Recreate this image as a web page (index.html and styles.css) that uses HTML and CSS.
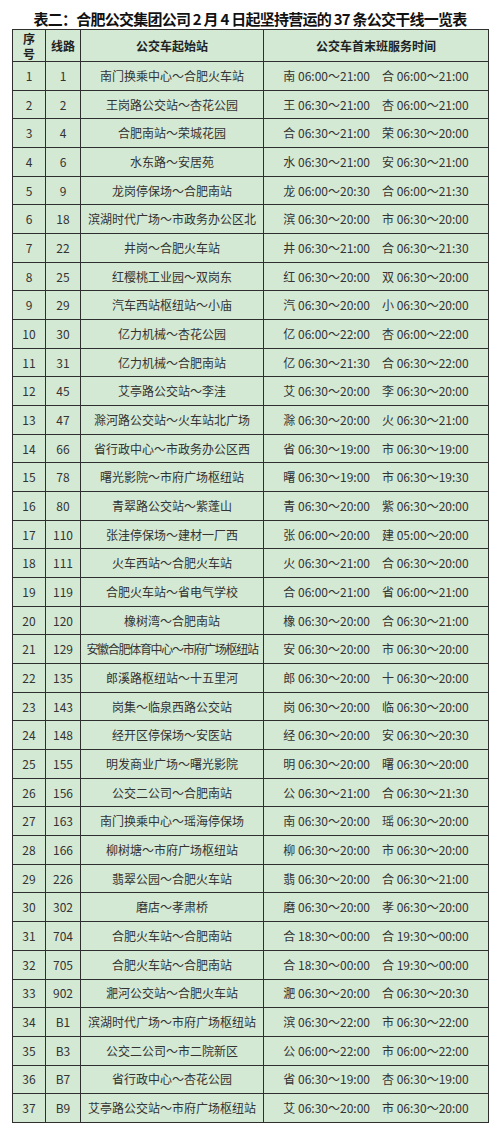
FILE: index.html
```html
<!DOCTYPE html>
<html lang="zh-CN">
<head>
<meta charset="utf-8">
<title>公交干线一览表</title>
<link rel="stylesheet" href="styles.css">
</head>
<body>
<div class="page">
<h1 class="title">表二：合肥公交集团公司 2 月 4 日起坚持营运的 37 条公交干线一览表</h1>
<table class="bus">
<colgroup><col class="c1"><col class="c2"><col class="c3"><col class="c4"></colgroup>
<thead>
<tr><th>序<br>号</th><th>线路</th><th>公交车起始站</th><th>公交车首末班服务时间</th></tr>
</thead>
<tbody>
<tr><td>1</td><td>1</td><td>南门换乘中心～合肥火车站</td><td><span class="t">南 06:00～21:00</span><span class="t">合 06:00～21:00</span></td></tr>
<tr><td>2</td><td>2</td><td>王岗路公交站～杏花公园</td><td><span class="t">王 06:30～21:00</span><span class="t">杏 06:00～21:00</span></td></tr>
<tr><td>3</td><td>4</td><td>合肥南站～荣城花园</td><td><span class="t">合 06:30～21:00</span><span class="t">荣 06:30～20:00</span></td></tr>
<tr><td>4</td><td>6</td><td>水东路～安居苑</td><td><span class="t">水 06:30～21:00</span><span class="t">安 06:30～21:00</span></td></tr>
<tr><td>5</td><td>9</td><td>龙岗停保场～合肥南站</td><td><span class="t">龙 06:00～20:30</span><span class="t">合 06:00～21:30</span></td></tr>
<tr><td>6</td><td>18</td><td>滨湖时代广场～市政务办公区北</td><td><span class="t">滨 06:30～20:00</span><span class="t">市 06:30～20:00</span></td></tr>
<tr><td>7</td><td>22</td><td>井岗～合肥火车站</td><td><span class="t">井 06:30～21:00</span><span class="t">合 06:30～21:30</span></td></tr>
<tr><td>8</td><td>25</td><td>红樱桃工业园～双岗东</td><td><span class="t">红 06:30～20:00</span><span class="t">双 06:30～20:00</span></td></tr>
<tr><td>9</td><td>29</td><td>汽车西站枢纽站～小庙</td><td><span class="t">汽 06:30～20:00</span><span class="t">小 06:30～20:00</span></td></tr>
<tr><td>10</td><td>30</td><td>亿力机械～杏花公园</td><td><span class="t">亿 06:00～22:00</span><span class="t">杏 06:00～22:00</span></td></tr>
<tr><td>11</td><td>31</td><td>亿力机械～合肥南站</td><td><span class="t">亿 06:30～21:30</span><span class="t">合 06:30～22:00</span></td></tr>
<tr><td>12</td><td>45</td><td>艾亭路公交站～李洼</td><td><span class="t">艾 06:30～20:00</span><span class="t">李 06:30～20:00</span></td></tr>
<tr><td>13</td><td>47</td><td>滁河路公交站～火车站北广场</td><td><span class="t">滁 06:30～20:00</span><span class="t">火 06:30～21:00</span></td></tr>
<tr><td>14</td><td>66</td><td>省行政中心～市政务办公区西</td><td><span class="t">省 06:30～19:00</span><span class="t">市 06:30～19:00</span></td></tr>
<tr><td>15</td><td>78</td><td>曙光影院～市府广场枢纽站</td><td><span class="t">曙 06:30～19:00</span><span class="t">市 06:30～19:30</span></td></tr>
<tr><td>16</td><td>80</td><td>青翠路公交站～紫蓬山</td><td><span class="t">青 06:30～20:00</span><span class="t">紫 06:30～20:00</span></td></tr>
<tr><td>17</td><td>110</td><td>张洼停保场～建材一厂西</td><td><span class="t">张 06:00～20:00</span><span class="t">建 05:00～20:00</span></td></tr>
<tr><td>18</td><td>111</td><td>火车西站～合肥火车站</td><td><span class="t">火 06:30～21:00</span><span class="t">合 06:30～20:00</span></td></tr>
<tr><td>19</td><td>119</td><td>合肥火车站～省电气学校</td><td><span class="t">合 06:00～21:00</span><span class="t">省 06:00～21:00</span></td></tr>
<tr><td>20</td><td>120</td><td>橡树湾～合肥南站</td><td><span class="t">橡 06:30～20:00</span><span class="t">合 06:30～21:00</span></td></tr>
<tr><td>21</td><td>129</td><td class="tight">安徽合肥体育中心～市府广场枢纽站</td><td><span class="t">安 06:30～20:00</span><span class="t">市 06:30～20:00</span></td></tr>
<tr><td>22</td><td>135</td><td>郎溪路枢纽站～十五里河</td><td><span class="t">郎 06:30～20:00</span><span class="t">十 06:30～20:00</span></td></tr>
<tr><td>23</td><td>143</td><td>岗集～临泉西路公交站</td><td><span class="t">岗 06:30～20:00</span><span class="t">临 06:30～20:00</span></td></tr>
<tr><td>24</td><td>148</td><td>经开区停保场～安医站</td><td><span class="t">经 06:30～20:00</span><span class="t">安 06:30～20:30</span></td></tr>
<tr><td>25</td><td>155</td><td>明发商业广场～曙光影院</td><td><span class="t">明 06:30～20:00</span><span class="t">曙 06:30～20:00</span></td></tr>
<tr><td>26</td><td>156</td><td>公交二公司～合肥南站</td><td><span class="t">公 06:30～21:00</span><span class="t">合 06:30～21:30</span></td></tr>
<tr><td>27</td><td>163</td><td>南门换乘中心～瑶海停保场</td><td><span class="t">南 06:30～20:00</span><span class="t">瑶 06:30～20:00</span></td></tr>
<tr><td>28</td><td>166</td><td>柳树塘～市府广场枢纽站</td><td><span class="t">柳 06:30～20:00</span><span class="t">市 06:30～20:00</span></td></tr>
<tr><td>29</td><td>226</td><td>翡翠公园～合肥火车站</td><td><span class="t">翡 06:30～20:00</span><span class="t">合 06:30～21:00</span></td></tr>
<tr><td>30</td><td>302</td><td>磨店～孝肃桥</td><td><span class="t">磨 06:30～20:00</span><span class="t">孝 06:30～20:00</span></td></tr>
<tr><td>31</td><td>704</td><td>合肥火车站～合肥南站</td><td><span class="t">合 18:30～00:00</span><span class="t">合 19:30～00:00</span></td></tr>
<tr><td>32</td><td>705</td><td>合肥火车站～合肥南站</td><td><span class="t">合 18:30～00:00</span><span class="t">合 19:30～00:00</span></td></tr>
<tr><td>33</td><td>902</td><td>淝河公交站～合肥火车站</td><td><span class="t">淝 06:30～20:00</span><span class="t">合 06:30～20:30</span></td></tr>
<tr><td>34</td><td>B1</td><td>滨湖时代广场～市府广场枢纽站</td><td><span class="t">滨 06:30～22:00</span><span class="t">市 06:30～22:00</span></td></tr>
<tr><td>35</td><td>B3</td><td>公交二公司～市二院新区</td><td><span class="t">公 06:00～22:00</span><span class="t">市 06:00～22:00</span></td></tr>
<tr><td>36</td><td>B7</td><td>省行政中心～杏花公园</td><td><span class="t">省 06:30～19:00</span><span class="t">杏 06:30～19:00</span></td></tr>
<tr><td>37</td><td>B9</td><td>艾亭路公交站～市府广场枢纽站</td><td><span class="t">艾 06:30～20:00</span><span class="t">市 06:30～20:00</span></td></tr>
</tbody>
</table>
</div>
</body>
</html>
```
FILE: styles.css
```css
html, body {
  margin: 0;
  padding: 0;
  background: #ffffff;
}
.page {
  width: 500px;
  font-family: "Noto Sans CJK SC", "Noto Sans", sans-serif;
  color: #222;
}
.title {
  margin: 0;
  padding-top: 9px;
  height: 20px;
  line-height: 20px;
  font-size: 15px;
  font-weight: 700;
  letter-spacing: -0.75px;
  text-align: center;
  color: #111;
  white-space: nowrap;
}
.bus {
  margin: 0 0 0 12px;
  width: 476px;
  border-collapse: collapse;
  table-layout: fixed;
  background: #d4e9d4;
  border: 1.5px solid #2a2a2a;
}
.c1 { width: 33px; }
.c2 { width: 35px; }
.c3 { width: 183px; }
.c4 { width: 225px; }
.bus th, .bus td {
  border: 1px solid #2f2f2f;
  padding: 0;
  text-align: center;
  vertical-align: middle;
  white-space: nowrap;
  overflow: hidden;
}
.bus th {
  height: 31px;
  font-size: 12px;
  line-height: 15px;
  font-weight: 700;
  color: #222;
}
.bus td {
  height: 27.68px;
  font-size: 12px;
  line-height: 14px;
  color: #333;
}
.bus td.tight {
  letter-spacing: -1.3px;
}
.t + .t {
  margin-left: 12px;
}
```
